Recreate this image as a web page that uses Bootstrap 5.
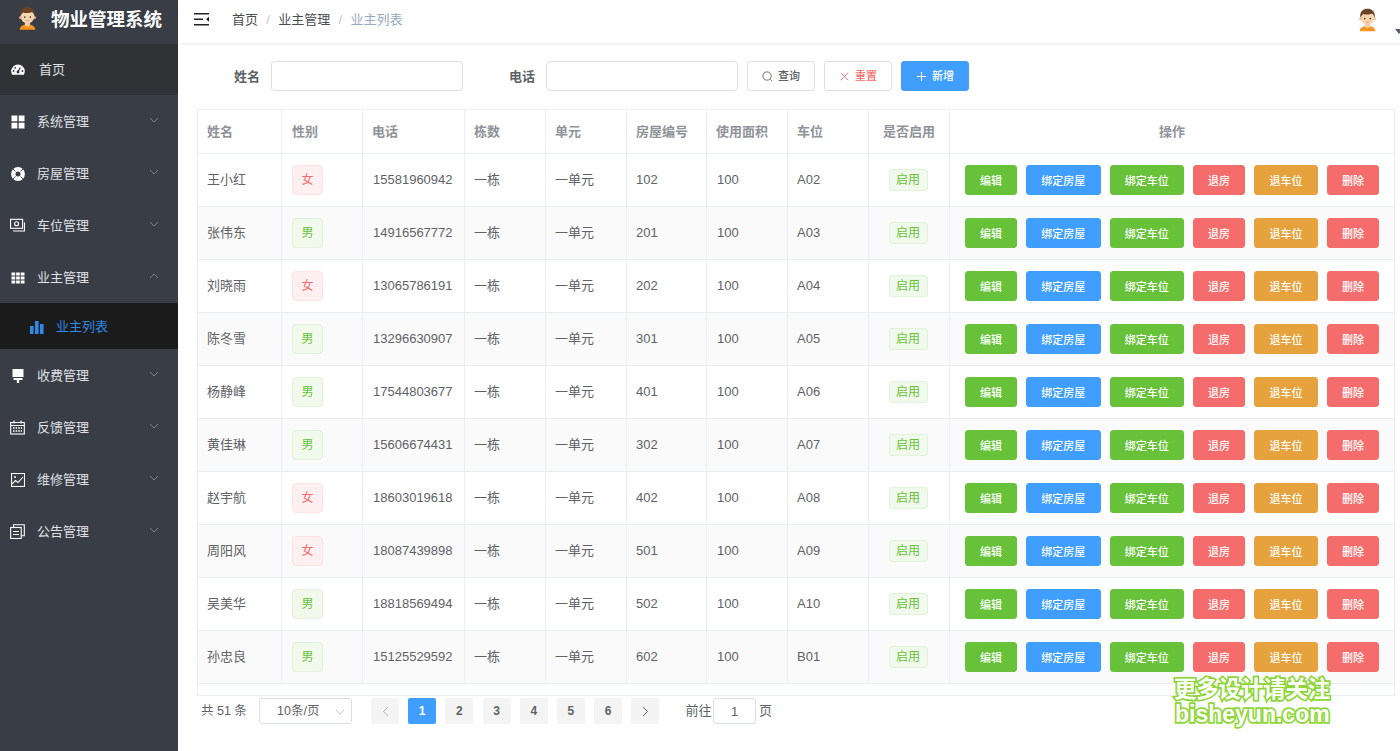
<!DOCTYPE html>
<html lang="zh-CN">
<head>
<meta charset="utf-8">
<title>物业管理系统</title>
<link href="https://cdn.jsdelivr.net/npm/bootstrap@5.3.0/dist/css/bootstrap.min.css" rel="stylesheet">
<style>
html,body{height:751px;overflow:hidden}
body{font-family:"Liberation Sans","Noto Sans CJK SC",sans-serif;font-size:13px;color:#606266;background:#fff}
.shell{height:751px}
.side{width:178px;background:#393d46;color:#e4e6ea;flex:none}
.brand{height:44px;color:#fff;font-size:18.5px;font-weight:700;padding:0 0 5px 18px;gap:14px}
.brand svg{width:19px;height:24px;margin-bottom:4px}
.mitem{height:52px;padding:1px 0 0 11px;gap:12px;position:relative;color:#dfe1e5}
.mitem svg.ic{width:14px;height:14px;flex:none}
.mitem svg.ic15{width:15px;height:15px;margin-left:-1px}
.mhome{background:#303236;gap:14px;height:51px;padding-top:0}
.msub{height:46px;background:#1b1b1b;color:#2f8ae6;padding:1px 0 0 30px;gap:12px}
.msub svg{width:14px;height:14px}
.chev{position:absolute;left:149px;top:22px;width:10px;height:6px}
.topbar{height:44px;border-bottom:1px solid #f0f1f4;box-shadow:0 1px 3px rgba(0,21,41,.04);padding:0 0 4px 16px;position:relative}
.topbar .breadcrumb{margin:0 0 0 23px;font-size:13px;--bs-breadcrumb-divider-color:#c0c4cc;--bs-breadcrumb-item-padding-x:8.3px}
.topbar .breadcrumb-item{color:#4a4d52}
.topbar .breadcrumb-item.active{color:#97a8be}
.hamb{width:15px;height:13px}
.ava2{position:absolute;left:1180px;top:7px;width:19px;height:25px}
.caretx{position:absolute;left:1217px;top:29px;border:4px solid transparent;border-top:5px solid #5a5e66;border-bottom:0}
.filter{padding:17px 0 0 56px;height:65px}
.flabel{width:26px;font-weight:700;color:#606266;margin-right:11px;flex:none;line-height:30px;padding-top:1px}
.finput{width:192px;height:30px;border:1px solid #dcdfe6;border-radius:4px;font-size:13px;padding:0 10px;box-shadow:none;flex:none}
.gap1{margin-right:46px}
.sbtn{width:68px;height:30px;font-size:11px;font-weight:500;padding:1px 0 0;border:1px solid #dcdfe6;border-radius:3px;background:#fff;color:#606266;margin-left:9px;display:flex;align-items:center;justify-content:center;gap:5px}
.sbtn svg{width:11px;height:11px}
.sbtn.red{color:#f56c6c}
.sbtn.blue{background:#409eff;border-color:#409eff;color:#fff}
.tbox{margin-left:19px;width:1198px;height:587px;border:1px solid #ebeef5;border-top-color:#f2f3f8}
.tbl{table-layout:fixed;width:1198px;margin:-1px 0 0 -1px;--bs-table-border-color:#ebeef5;--bs-border-color:#ebeef5;color:#606266;font-size:13px}
.tbl th,.tbl td{padding:0 0 0 9px;vertical-align:middle;border-width:1px;color:#606266;background:transparent;box-shadow:none}
.tbl thead th{height:44px;color:#909399;font-weight:700}
.tbl tbody tr{height:53px}
.tbl tbody tr:nth-child(even) td{background:#fafafa}
.tbl th:nth-child(1){width:84px}.tbl th:nth-child(2){width:81px}.tbl th:nth-child(3){width:102px}
.tbl th:nth-child(4),.tbl th:nth-child(5){width:81px}.tbl th:nth-child(6){width:80px}
.tbl th:nth-child(7),.tbl th:nth-child(8),.tbl th:nth-child(9){width:81px}
.tbl th:nth-child(2),.tbl td:nth-child(2),.tbl td:nth-child(3),.tbl td:nth-child(7){padding-left:10px}
.tbl .cen{text-align:center;padding-left:0}
.sex{display:inline-flex;width:31px;height:30px;align-items:center;justify-content:center;border-radius:4px;font-size:12px;font-weight:400;border:1px solid}
.girl{background:#fef0f0;border-color:#fde2e2;color:#f56c6c}
.boy{background:#f0f9eb;border-color:#e1f3d8;color:#67c23a}
.state{display:inline-flex;width:39px;height:22px;align-items:center;justify-content:center;border-radius:3px;font-size:12px;background:#f0f9eb;border:1px solid #e1f3d8;color:#67c23a;margin-right:2px}
.acts{padding-left:15px!important}
.abtn{height:30px;width:52px;padding:1px 0 0;font-size:11px;font-weight:500;color:#fff;border-radius:3px;border:1px solid;margin-right:9px;flex:none;line-height:26px}
.abtn.w4{width:74.5px}.abtn.w3{width:64px}
.g{background:#67c23a;border-color:#67c23a}.b{background:#409eff;border-color:#409eff}
.r{background:#f56c6c;border-color:#f56c6c}.o{background:#e6a23c;border-color:#e6a23c}
.pager{margin:2px 0 0 23px;height:26px;font-size:12.5px}
.ptotal{width:58px;flex:none}
.psel{width:93px;height:26px;border:1px solid #dcdfe6;border-radius:3px;padding-left:17px;margin-right:19px;position:relative;flex:none}
.psel svg{position:absolute;right:6px;top:10px;width:10px;height:6px}
.pgn{width:28px;height:26px;background:#f4f4f5;color:#606266;font-size:12px;font-weight:700;border-radius:2px;margin-right:9.2px;flex:none}
.pgn.on{background:#409eff;color:#fff}
.pgn.off{color:#c0c4cc}
.pgn svg{width:7px;height:11px}
.pjump{margin-left:17px;gap:1.5px;font-size:13px}
.pinp{width:43px;height:26px;border:1px solid #dcdfe6;border-radius:3px;text-align:center;font-size:13px;padding:0;box-shadow:none;color:#606266;margin-right:1.5px}
.wm{position:absolute;left:1174px;top:672px;color:#fff;font-weight:700;font-family:"Noto Sans CJK SC","Liberation Sans",sans-serif;-webkit-text-stroke:3.5px #8fd63a;paint-order:stroke fill;line-height:1}
.wm1{font-size:22.3px;height:29px;line-height:30px;white-space:nowrap}
.wm2{font-size:23px;line-height:27px;padding-left:1px;font-family:"Liberation Sans",sans-serif;white-space:nowrap}
</style>
</head>
<body>
<svg width="0" height="0" class="position-absolute">
<defs>
<symbol id="face" viewBox="0 0 22 27">
<path d="M2 27c0-4 4-6 9-6s9 2 9 6z" fill="#f7931e"/>
<path d="M8 18h6v4c-1 2-5 2-6 0z" fill="#f5c9a0"/>
<circle cx="11" cy="11.5" r="8" fill="#f9d4b0"/>
<circle cx="2.8" cy="13" r="1.6" fill="#f3c199"/><circle cx="19.2" cy="13" r="1.6" fill="#f3c199"/>
<path d="M2.8 12C1.5 4 6 1 11 1s9.500 3 8.200 11c-.6-3-1.500-4.500-3-5.500-3 1.500-8 1.500-10 .5-1.500 1-2.800 2.500-3.400 5z" fill="#6b4226"/>
<circle cx="7.800" cy="12.500" r=".9" fill="#4b3020"/><circle cx="14.200" cy="12.500" r=".9" fill="#4b3020"/>
<path d="M9 16.200c1.200.8 2.800.8 4 0" stroke="#c9825a" stroke-width=".8" fill="none"/>
</symbol>
</defs>
</svg>
<div class="shell d-flex">
<aside class="side">
<div class="brand d-flex align-items-center"><svg><use href="#face"/></svg><span>物业管理系统</span></div>
<div class="mitem mhome d-flex align-items-center"><svg class="ic" viewBox="0 0 14 14"><path d="M7 1.500A6.800 6.800 0 0 0 .2 8.300c0 1.300.4 2.400 1 3.400h11.600c.6-1 1-2.100 1-3.400A6.800 6.800 0 0 0 7 1.500z" fill="#fff"/><path d="M7 9 9.200 4.500" stroke="#303236" stroke-width="1.200"/><circle cx="7" cy="9" r="1.400" fill="#303236"/><circle cx="2.600" cy="8" r=".9" fill="#303236"/><circle cx="4.200" cy="4.800" r=".9" fill="#303236"/><circle cx="11.400" cy="8" r=".9" fill="#303236"/></svg><span>首页</span></div>
<div class="mitem d-flex align-items-center"><svg class="ic" viewBox="0 0 14 14" fill="#fff"><rect x="0.500" y="0.500" width="5.800" height="5.800"/><rect x="7.700" y="0.500" width="5.800" height="5.800"/><rect x="0.500" y="7.700" width="5.800" height="5.800"/><rect x="7.700" y="7.700" width="5.800" height="5.800"/></svg><span>系统管理</span><svg class="chev" viewBox="0 0 10 6"><path d="M1 1l4 4 4-4" fill="none" stroke="#7c818b"/></svg></div>
<div class="mitem d-flex align-items-center"><svg class="ic" viewBox="0 0 14 14"><circle cx="7" cy="7" r="4.700" fill="none" stroke="#fff" stroke-width="4.400"/><path d="M1.500 1.500l3 3M12.500 1.500l-3 3M1.500 12.500l3-3M12.500 12.500l-3-3" stroke="#393d46" stroke-width=".9"/></svg><span>房屋管理</span><svg class="chev" viewBox="0 0 10 6"><path d="M1 1l4 4 4-4" fill="none" stroke="#7c818b"/></svg></div>
<div class="mitem d-flex align-items-center"><svg class="ic ic15" viewBox="0 0 15 14" fill="none" stroke="#fff" stroke-width="1.100"><rect x=".6" y=".8" width="12" height="9"/><circle cx="6.600" cy="5.300" r="2"/><path d="M3 12.500h11.500V4"/></svg><span>车位管理</span><svg class="chev" viewBox="0 0 10 6"><path d="M1 1l4 4 4-4" fill="none" stroke="#7c818b"/></svg></div>
<div class="mitem d-flex align-items-center"><svg class="ic" viewBox="0 0 14 14" fill="#fff"><rect x=".5" y="1.500" width="3.700" height="3"/><rect x="5.100" y="1.500" width="3.700" height="3"/><rect x="9.700" y="1.500" width="3.800" height="3"/><rect x=".5" y="5.500" width="3.700" height="3"/><rect x="5.100" y="5.500" width="3.700" height="3"/><rect x="9.700" y="5.500" width="3.800" height="3"/><rect x=".5" y="9.500" width="3.700" height="3"/><rect x="5.100" y="9.500" width="3.700" height="3"/><rect x="9.700" y="9.500" width="3.800" height="3"/></svg><span>业主管理</span><svg class="chev" viewBox="0 0 10 6"><path d="M1 5l4-4 4 4" fill="none" stroke="#7c818b"/></svg></div>
<div class="msub d-flex align-items-center"><svg viewBox="0 0 14 14" fill="#2f8ae6"><rect x="0" y="6" width="3.600" height="8"/><rect x="5" y="1" width="3.600" height="13"/><rect x="10" y="4" width="3.600" height="10"/></svg><span>业主列表</span></div>
<div class="mitem d-flex align-items-center"><svg class="ic" viewBox="0 0 14 14" fill="#fff"><path d="M1.500 0h11v8h-11z"/><path d="M2.500 9h9v2H8.200v3H5.800v-3H2.500z"/></svg><span>收费管理</span><svg class="chev" viewBox="0 0 10 6"><path d="M1 1l4 4 4-4" fill="none" stroke="#7c818b"/></svg></div>
<div class="mitem d-flex align-items-center"><svg class="ic ic15" viewBox="0 0 15 15" fill="none" stroke="#fff" stroke-width="1.100"><rect x=".7" y="2.500" width="13.600" height="11.500"/><path d="M4 .5v3M11 .5v3M.7 5.500h13.600"/><path d="M3 8h9M3 11h9" stroke-width="1.500" stroke-dasharray="1.600 1"/></svg><span>反馈管理</span><svg class="chev" viewBox="0 0 10 6"><path d="M1 1l4 4 4-4" fill="none" stroke="#7c818b"/></svg></div>
<div class="mitem d-flex align-items-center"><svg class="ic" viewBox="0 0 14 14" fill="none" stroke="#fff" stroke-width="1.100"><rect x=".5" y=".5" width="13" height="13"/><circle cx="4" cy="4" r="1" fill="#fff" stroke="none"/><path d="M1 11l3.500-3.500 2.500 2 5-5.500"/></svg><span>维修管理</span><svg class="chev" viewBox="0 0 10 6"><path d="M1 1l4 4 4-4" fill="none" stroke="#7c818b"/></svg></div>
<div class="mitem d-flex align-items-center"><svg class="ic ic15" viewBox="0 0 15 15" fill="none" stroke="#fff" stroke-width="1.100"><rect x=".7" y="3.500" width="10.500" height="11"/><path d="M3.500 3.500V.7h10.800v11h-3M3 7.500h6M3 10.500h6"/></svg><span>公告管理</span><svg class="chev" viewBox="0 0 10 6"><path d="M1 1l4 4 4-4" fill="none" stroke="#7c818b"/></svg></div>
</aside>
<main class="flex-grow-1">
<div class="topbar d-flex align-items-center">
<svg class="hamb" viewBox="0 0 15 13" fill="#222"><rect y="0" width="15" height="1.500"/><rect y="5.500" width="9" height="1.500"/><rect y="11" width="15" height="1.500"/><path d="M15 3.800v5l-3-2.500z"/></svg>
<ol class="breadcrumb"><li class="breadcrumb-item">首页</li><li class="breadcrumb-item">业主管理</li><li class="breadcrumb-item active">业主列表</li></ol>
<svg class="ava2"><use href="#face"/></svg><span class="caretx"></span>
</div>
<div class="filter d-flex align-items-start">
<label class="flabel">姓名</label><input class="form-control finput gap1" type="text">
<label class="flabel">电话</label><input class="form-control finput" type="text">
<button class="btn sbtn"><svg viewBox="0 0 12 12" fill="none" stroke="#606266"><circle cx="5.500" cy="5.500" r="4.500"/><path d="M9 9l2 2"/></svg>查询</button>
<button class="btn sbtn red"><svg viewBox="0 0 12 12" fill="none" stroke="#f56c6c"><path d="M2 2l8 8M10 2l-8 8"/></svg>重置</button>
<button class="btn sbtn blue"><svg viewBox="0 0 12 12" fill="none" stroke="#fff" stroke-width="1.200"><path d="M6 1v10M1 6h10"/></svg>新增</button>
</div>
<div class="tbox">
<table class="table table-bordered tbl">
<thead><tr><th>姓名</th><th>性别</th><th>电话</th><th>栋数</th><th>单元</th><th>房屋编号</th><th>使用面积</th><th>车位</th><th class="cen">是否启用</th><th class="cen">操作</th></tr></thead>
<tbody id="rows"></tbody>
</table>
</div>
<div class="pager d-flex align-items-center">
<span class="ptotal">共 51 条</span>
<div class="psel d-flex align-items-center">10条/页<svg viewBox="0 0 10 6"><path d="M1 1l4 4 4-4" fill="none" stroke="#c0c4cc"/></svg></div>
<div class="pgn off d-flex align-items-center justify-content-center"><svg viewBox="0 0 7 11"><path d="M6 1L1.500 5.500 6 10" fill="none" stroke="#b0b4bc"/></svg></div>
<div class="pgn on d-flex align-items-center justify-content-center">1</div>
<div class="pgn d-flex align-items-center justify-content-center">2</div>
<div class="pgn d-flex align-items-center justify-content-center">3</div>
<div class="pgn d-flex align-items-center justify-content-center">4</div>
<div class="pgn d-flex align-items-center justify-content-center">5</div>
<div class="pgn d-flex align-items-center justify-content-center">6</div>
<div class="pgn d-flex align-items-center justify-content-center"><svg viewBox="0 0 7 11"><path d="M1 1l4.500 4.500L1 10" fill="none" stroke="#606266"/></svg></div>
<div class="pjump d-flex align-items-center"><span>前往</span><input class="form-control pinp" value="1"><span>页</span></div>
</div>
</main>
</div>
<div class="wm"><div class="wm1">更多设计请关注</div><div class="wm2">bisheyun.com</div></div>
<script src="https://cdn.jsdelivr.net/npm/bootstrap@5.3.0/dist/js/bootstrap.bundle.min.js"></script>
<script>
var data=[["王小红","女","15581960942","102","A02"],["张伟东","男","14916567772","201","A03"],["刘晓雨","女","13065786191","202","A04"],["陈冬雪","男","13296630907","301","A05"],["杨静峰","男","17544803677","401","A06"],["黄佳琳","男","15606674431","302","A07"],["赵宇航","女","18603019618","402","A08"],["周阳风","女","18087439898","501","A09"],["吴美华","男","18818569494","502","A10"],["孙忠良","男","15125529592","602","B01"]];
document.getElementById("rows").innerHTML=data.map(function(d){
return '<tr><td>'+d[0]+'</td><td><span class="sex '+(d[1]=="女"?"girl":"boy")+'">'+d[1]+'</span></td><td>'+d[2]+'</td><td>一栋</td><td>一单元</td><td>'+d[3]+'</td><td>100</td><td>'+d[4]+'</td><td class="cen"><span class="state">启用</span></td><td class="acts"><div class="d-flex"><button class="btn abtn g">编辑</button><button class="btn abtn w4 b">绑定房屋</button><button class="btn abtn w4 g">绑定车位</button><button class="btn abtn r">退房</button><button class="btn abtn w3 o">退车位</button><button class="btn abtn r">删除</button></div></td></tr>';
}).join("");
</script>
</body>
</html>
